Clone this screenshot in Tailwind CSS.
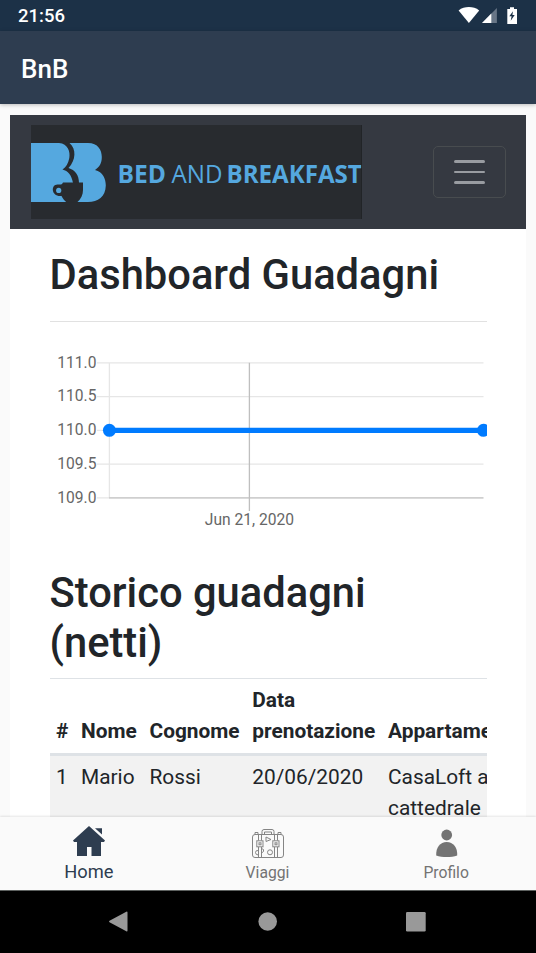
<!DOCTYPE html>
<html lang="it">
<head>
<meta charset="utf-8">
<title>BnB</title>
<script src="https://cdn.jsdelivr.net/npm/@tailwindcss/browser@4"></script>
</head>
<body class="w-[536px] h-[953px] overflow-hidden bg-[#fafafa] font-[Roboto,sans-serif] text-[#212529] flex flex-col">
  <div class="h-[31px] shrink-0 bg-[#1c3147] flex items-center justify-between pl-[18px] pr-[18px] text-white">
    <span class="text-[18.500px] font-medium leading-[31px] pt-[2px]">21:56</span>
    <svg width="60" height="31" viewBox="458 0 60 31" fill="#fff">
      <path d="M458.600 10.400C464.500 6 473.300 6 479.200 10.400L468.900 23Z"/>
      <path d="M496.900 8V23H482Z" fill="#687687"/><path d="M491.300 13.500V23H482Z"/>
      <path d="M507.300 9H510V7.300H514V9H517V24H507.300Z"/><path d="M513 11.300L509.300 16.300H511.600L510.700 20.700L514.700 14.900H512.400Z" fill="#1c3147"/>
    </svg>
  </div>
  <header class="h-[73px] shrink-0 bg-[#2e3d50] flex items-center pl-[21px] pt-[3px] shadow-[0_1px_4px_rgba(0,0,0,0.25)]">
    <span class="text-[26px] font-medium text-white leading-none">BnB</span>
  </header>

  <main class="h-[713px] shrink-0 px-[10px] pt-[11px] overflow-hidden">
    <div class="w-[516px] h-[702px] bg-white">
      <nav class="h-[114px] bg-[#353941] flex items-center justify-between pl-[21px] pr-[20px]">
        <svg width="331" height="94" viewBox="31 125 331 94" class="bg-[#282b2f]">
          <g fill="#55a8df">
            <path d="M31 143H59C68 143.500 70.500 152 69.300 158C68.300 163.500 66 167 62.500 169.500C68 171 71.500 175 73 183V202H31Z"/>
            <path d="M69.500 143H88C98 143 101.800 150 101.800 157C101.800 163 99.500 167 95 170C103 172 105.800 179 105.800 185.500C105.500 197 98 202 88 202H74V183H79C79 175 75 170 68.500 168C76 160 76.500 149 69.500 143Z"/>
          </g>
          <path d="M63 182.500H83V190C83 195 81 199 77 202.500H67C64.500 201 63 199 61.500 196C51 197 50.500 184.500 57.500 184.500C60.500 184.500 62 185 63 182.500Z" fill="#282b2f"/>
          <circle cx="58.700" cy="190.400" r="2.600" fill="#55a8df"/>
          <g fill="#55a8df" font-family="Open Sans, Noto Sans, sans-serif" font-size="25">
            <text x="117.500" y="183" font-weight="700" textLength="48.500" lengthAdjust="spacingAndGlyphs">BED</text>
            <text x="171.500" y="183" font-weight="400" textLength="51" lengthAdjust="spacingAndGlyphs">AND</text>
            <text x="226.500" y="183" font-weight="700" textLength="135.300" lengthAdjust="spacingAndGlyphs">BREAKFAST</text>
          </g>
          <path d="M361.500 125V219" stroke="#1c1f23" stroke-opacity="0.600"/>
        </svg>
        <div class="w-[73px] h-[52px] border border-[#484c4f] rounded-[5px] flex flex-col items-center justify-center gap-[8px]">
          <i class="block w-[31px] h-[2.500px] rounded bg-[#999ca1]"></i>
          <i class="block w-[31px] h-[2.500px] rounded bg-[#999ca1]"></i>
          <i class="block w-[31px] h-[2.500px] rounded bg-[#999ca1]"></i>
        </div>
      </nav>
      <section class="w-[437px] ml-[40px] pt-[21px] overflow-hidden">
        <h1 class="text-[41.700px] leading-[50px] font-medium whitespace-nowrap -ml-[0.500px]">Dashboard Guadagni</h1>
        <hr class="mt-[21px] border-t border-[#e1e1e1]">
        <svg class="block" width="437" height="246" viewBox="50 322 437 246">
          <g stroke="#e6e6e6" stroke-width="1.300" fill="none">
            <path d="M97 362.800H483.500M97 396.600H483.500M97 430.300H483.500M97 464.100H483.500M97 497.900H109M109.400 362.800V497.900"/>
            <path d="M109 497.900H483.500" stroke="#cfcfcf" stroke-width="1.600"/>
            <path d="M249.400 362.800V511" stroke="#bfbfbf"/>
          </g>
          <path d="M109.400 430.300H483.500" stroke="#007bff" stroke-width="5.200"/>
          <circle cx="109.400" cy="430.300" r="6.500" fill="#007bff"/><circle cx="483.500" cy="430.300" r="6.500" fill="#007bff"/>
          <g font-family="Roboto, sans-serif" font-size="15.600" fill="#666" text-anchor="end">
            <text x="96.500" y="367.600">111.0</text><text x="96.500" y="401.200">110.5</text><text x="96.500" y="434.900">110.0</text><text x="96.500" y="468.700">109.5</text><text x="96.500" y="502.600">109.0</text>
            <text x="249.400" y="524.700" text-anchor="middle">Jun 21, 2020</text>
          </g>
        </svg>
        <h1 class="text-[41.700px] leading-[50px] font-medium -ml-[0.500px]">Storico guadagni<br>(netti)</h1>
        <table class="mt-[10px] w-[560px] table-fixed border-t border-[#dee2e6] text-[20.850px] leading-[31.200px] text-left border-separate border-spacing-0">
          <colgroup><col class="w-[25px]"><col class="w-[68px]"><col class="w-[103px]"><col class="w-[136px]"><col class="w-[228px]"></colgroup>
          <thead>
            <tr class="align-bottom">
              <th class="pl-[6px] py-[6px] border-b-3 border-[#dee2e6]">#</th>
              <th class="pl-[6px] py-[6px] border-b-3 border-[#dee2e6]">Nome</th>
              <th class="pl-[6.500px] py-[6px] border-b-3 border-[#dee2e6]">Cognome</th>
              <th class="pl-[6.300px] py-[6px] border-b-3 border-[#dee2e6]">Data<br>prenotazione</th>
              <th class="pl-[6px] py-[6px] border-b-3 border-[#dee2e6]">Appartamento</th>
            </tr>
          </thead>
          <tbody>
            <tr class="align-top bg-[#f2f2f2]">
              <td class="pl-[6px] py-[6px]">1</td><td class="pl-[6px] py-[6px]">Mario</td><td class="pl-[6.500px] py-[6px]">Rossi</td><td class="pl-[6.300px] py-[6px]">20/06/2020</td><td class="pl-[6px] py-[6px] leading-[31px]">CasaLoft alla<br>cattedrale</td>
            </tr>
          </tbody>
        </table>
      </section>
    </div>
  </main>

  <nav class="h-[73px] shrink-0 bg-[#fafafa] relative shadow-[0_-1px_2px_rgba(0,0,0,0.1)] grid grid-cols-3 text-[#737373]">
    <div class="flex flex-col items-center text-[#2e3d50]">
      <svg class="mt-[8px]" width="34" height="32" viewBox="72 825 34 32" fill="#2e3d50">
        <path d="M89 826L105 840.500L104 842H101V856H91.500V847H87V856H77V842H74L73 840.500Z"/><path d="M95 828.200H102V834.500Z"/>
      </svg>
      <span class="text-[18.300px] leading-[22px] mt-[4px] mr-[1px]">Home</span>
    </div>
    <div class="flex flex-col items-center">
      <svg class="mt-[10px]" width="34" height="32" viewBox="251 827 34 32" fill="none" stroke="#858585" stroke-width="1">
        <rect x="252.500" y="834.500" width="31" height="23" rx="2.500"/>
        <path d="M262 834V831.500Q262 829.500 264 829.500H272Q274 829.500 274 831.500V834M264.500 834V832H271.500V834M255 834.500V832.500H258V834.500M278 834.500V832.500H281V834.500M258.500 834.500V840.500M261.500 834.500V840.500M258.500 847V857.500M261.500 847V857.500M274.500 834.500V840.500M277.500 834.500V840.500M274.500 847V857.500M277.500 847V857.500M266 837L271 839.500L266 841.500Z"/>
        <rect x="256.800" y="840.800" width="6.200" height="6"/><rect x="259" y="842.800" width="2" height="2"/>
        <rect x="272.800" y="840.800" width="6.200" height="6"/><rect x="275" y="842.800" width="2" height="2"/>
        <circle cx="270" cy="852.300" r="2.500"/><path d="M258.500 850.500Q255.500 850 255.500 852.500T258.500 855M261.500 848.500Q264.500 849 263.500 851.500L261.500 853"/>
      </svg>
      <span class="text-[15.700px] leading-[20px] mt-[4px] mr-[1px]">Viaggi</span>
    </div>
    <div class="flex flex-col items-center">
      <svg class="mt-[10px]" width="34" height="32" viewBox="429.800 827 34 32" fill="#737373">
        <circle cx="446.500" cy="835" r="5.400"/><path d="M436 855.500C435.500 847.500 440 841.900 446.500 841.900S457.500 847.500 457 855.500C451 857.500 442 857.500 436 855.500Z"/>
      </svg>
      <span class="text-[15.700px] leading-[20px] mt-[4px] mr-[1px]">Profilo</span>
    </div>
  </nav>
  <footer class="h-[63px] shrink-0 bg-black relative">
    <svg width="536" height="63" viewBox="0 890 536 63" fill="#999">
      <path d="M0 890.500H536" stroke="#5d615f"/>
      <path d="M126.300 911.700Q127.500 911.200 127.500 912.500V930.500Q127.500 932 126.300 931.300L109.500 922.300Q108.500 921.500 109.500 920.800Z"/>
      <circle cx="267.700" cy="921.500" r="9.300"/>
      <rect x="406" y="912" width="19.700" height="19.500" rx="1.200"/>
    </svg>
  </footer>
</body>
</html>
